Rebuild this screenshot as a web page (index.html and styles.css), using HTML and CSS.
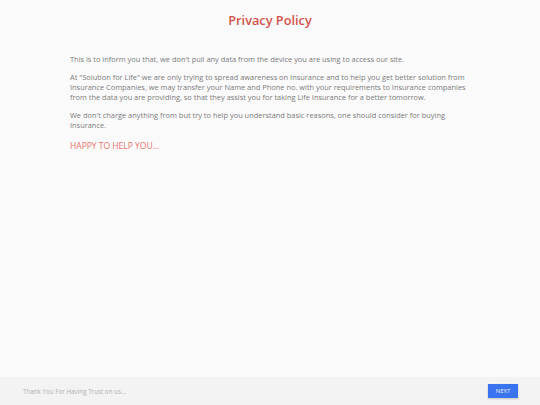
FILE: index.html
```html
<!DOCTYPE html>
<html>
<head>
<meta charset="utf-8">
<link rel="stylesheet" href="styles.css">
</head>
<body>
<div class="page">
  <main class="content">
    <h1 class="title">Privacy Policy</h1>
    <div class="text">
      <p>This is to inform you that, we don't pull any data from the device you are using to access our site.</p>
      <p>At "Solution for Life" we are only trying to spread awareness on Insurance and to help you get better solution from Insurance Companies, we may transfer your Name and Phone no. with your requirements to Insurance companies from the data you are providing, so that they assist you for taking Life Insurance for a better tomorrow.</p>
      <p>We don't charge anything from but try to help you understand basic reasons, one should consider for buying Insurance.</p>
      <p class="happy">HAPPY TO HELP YOU...</p>
    </div>
  </main>
  <footer class="footer">
    <span class="thanks">Thank You For Having Trust on us...</span>
    <button class="next">NEXT</button>
  </footer>
</div>
</body>
</html>
```
FILE: styles.css
```css
html, body {
  margin: 0;
  padding: 0;
  height: 100%;
}
body {
  background: #fafafa;
  font-family: "Open Sans", "Liberation Sans", sans-serif;
}
.page {
  display: flex;
  flex-direction: column;
  height: 405px;
}
.content {
  flex: 1;
}
.title {
  margin: 10px 0 0;
  text-align: center;
  font-size: 12.75px;
  font-weight: 600;
  color: #d4524c;
  line-height: 20px;
}
.text {
  padding: 24px 0 0 70px;
  width: 404px;
  font-size: 7.43px;
  line-height: 10.2px;
  color: #7a7a7a;
}
.text p {
  margin: 0 0 7.4px;
}
.text .happy {
  margin-top: 9.5px;
  font-size: 8.5px;
  line-height: 12px;
  color: #e8736e;
}
.footer {
  height: 28px;
  background: #f3f3f3;
  display: flex;
  align-items: center;
  justify-content: space-between;
  padding: 0 22px 0 23px;
}
.thanks {
  font-size: 6.27px;
  color: #b0b0b0;
}
.next {
  width: 30px;
  height: 14px;
  padding: 0;
  border: none;
  background: #3a73ee;
  color: #e4ecff;
  font-family: "Open Sans", "Liberation Sans", sans-serif;
  font-size: 6px;
  box-shadow: 0 1px 2px rgba(0,0,0,0.2);
}
```
